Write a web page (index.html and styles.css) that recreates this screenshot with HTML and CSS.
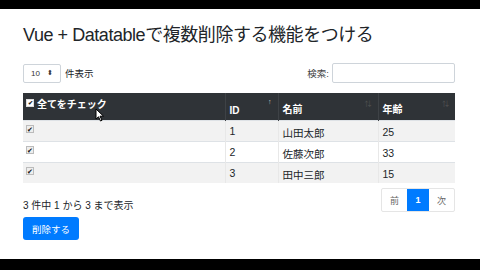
FILE: index.html
```html
<!DOCTYPE html>
<html>
<head>
<meta charset="utf-8">
<link rel="stylesheet" href="styles.css">
</head>
<body>
<div class="bar"></div>
<main class="page">
  <h1 class="title">Vue + Datatableで複数削除する機能をつける</h1>
  <div class="controls">
    <div class="length">
      <div class="select"><span>10</span><span class="spin">⬍</span></div>
      <span>件表示</span>
    </div>
    <div class="search">
      <span>検索:</span>
      <div class="input"></div>
    </div>
  </div>
  <table class="grid">
    <thead>
      <tr>
        <th class="c1"><span class="hcheck"><span class="box">✔</span>全てをチェック</span></th>
        <th class="c2">ID<span class="sort on">↑</span></th>
        <th class="c3">名前<span class="sort">⇅</span></th>
        <th class="c4">年齢<span class="sort">⇅</span></th>
      </tr>
    </thead>
    <tbody>
      <tr class="odd"><td><span class="cb">✔</span></td><td>1</td><td>山田太郎</td><td>25</td></tr>
      <tr><td><span class="cb">✔</span></td><td>2</td><td>佐藤次郎</td><td>33</td></tr>
      <tr class="odd"><td><span class="cb">✔</span></td><td>3</td><td>田中三郎</td><td>15</td></tr>
    </tbody>
  </table>
  <div class="footer">
    <div class="left">
      <div class="info">3 件中 1 から 3 まで表示</div>
      <button class="btn">削除する</button>
    </div>
    <div class="pager">
      <span class="pg">前</span><span class="pg active">1</span><span class="pg">次</span>
    </div>
  </div>
</main>
<div class="bar bottom"></div>
<svg class="cursor" width="10" height="14" viewBox="0 0 10 14"><path d="M1 1 L1 11 L3.5 8.8 L5.5 13 L7 12.3 L5 8.2 L8.5 8.2 Z" fill="#fff" stroke="#000" stroke-width="1"/></svg>
</body>
</html>
```
FILE: styles.css
```css
* { box-sizing: border-box; }
html, body { margin: 0; padding: 0; }
body {
  width: 480px; height: 270px; overflow: hidden; position: relative;
  background: #fff;
  font-family: "Liberation Sans", "Noto Sans CJK JP", sans-serif;
  color: #212529;
}
.bar { height: 9px; background: #000; }
.bar.bottom { height: 11px; }
.page { height: 250px; padding: 0 25px 0 23px; }
.title {
  margin: 0; padding-top: 15px; height: 52px;
  font-size: 18px; font-weight: 400; line-height: 22px; color: #212529;
  letter-spacing: -0.45px;
}
.controls { display: flex; justify-content: space-between; align-items: center; height: 20px; margin-top: 2px; font-size: 9.5px; }
.length { display: flex; align-items: center; gap: 4px; }
.select {
  width: 38px; height: 19px; border: 1px solid #ced4da; border-radius: 2px;
  display: flex; justify-content: space-between; align-items: center; padding: 0 7px 0 7px;
  font-size: 8px; color: #333;
}
.spin { font-size: 7px; }
.search { display: flex; align-items: center; gap: 3px; color: #444; }
.input { width: 123px; height: 20px; border: 1px solid #ced4da; border-radius: 2px; }
.grid {
  margin-top: 10px; width: 432px; border-collapse: collapse; font-size: 10.5px;
}
.grid th {
  background: #2f3337; color: #fff; text-align: left; height: 27px;
  vertical-align: bottom; padding: 0 4px 4px 4px; position: relative; font-weight: 700;
  font-size: 10px; border-right: 1px solid #3e4246;
}
.grid th:last-child { border-right: none; }
.c1 { width: 202px; }
.c2 { width: 53px; }
.c3 { width: 100px; }
.hcheck { display: flex; align-items: center; gap: 3px; position: relative; top: -5px; left: -1px; }
.box { width: 8px; height: 8px; background: #fff; border: 1px solid #ddd; display: inline-block; font-size: 6px; line-height: 7px; text-align: center; color: #222; }
.sort { position: absolute; right: 6px; top: 5px; font-size: 7px; color: #555; font-weight: 400; }
.sort.on { color: #ccc; }
.grid td {
  height: 21px; padding: 0 4px; border-top: 1px solid #dee2e6; vertical-align: middle;
  border-right: 1px solid #e8e8e8; color: #212529;
}
.grid tr td:nth-child(3), .grid tr td:nth-child(4) { padding-top: 3px; }
.grid td:last-child { border-right: none; }
.grid tr.odd td { background: #f2f2f2; }
.cb {
  display: inline-block; width: 8px; height: 8px; border: 1px solid #bbb; background: #eee;
  font-size: 7px; line-height: 7px; text-align: center; color: #111; position: relative; top: -3px; left: -1px;
}
.footer { display: flex; justify-content: space-between; margin-top: 5px; }
.info { font-size: 10px; margin-top: 9px; color: #212529; }
.btn {
  margin-top: 5px; width: 56px; height: 23px; background: #007bff; color: #fff; border: none;
  border-radius: 3px; font-size: 9.5px; font-family: inherit; padding: 0;
}
.pager { display: flex; height: 24px; border: 1px solid #e5e5e5; border-radius: 2px; }
.pg { width: 25px; display: flex; align-items: center; justify-content: center; font-size: 9px; color: #666; }
.pg.active { background: #007bff; color: #fff; width: 22px; font-weight: 700; }
.cursor { position: absolute; left: 95px; top: 108px; }
```
